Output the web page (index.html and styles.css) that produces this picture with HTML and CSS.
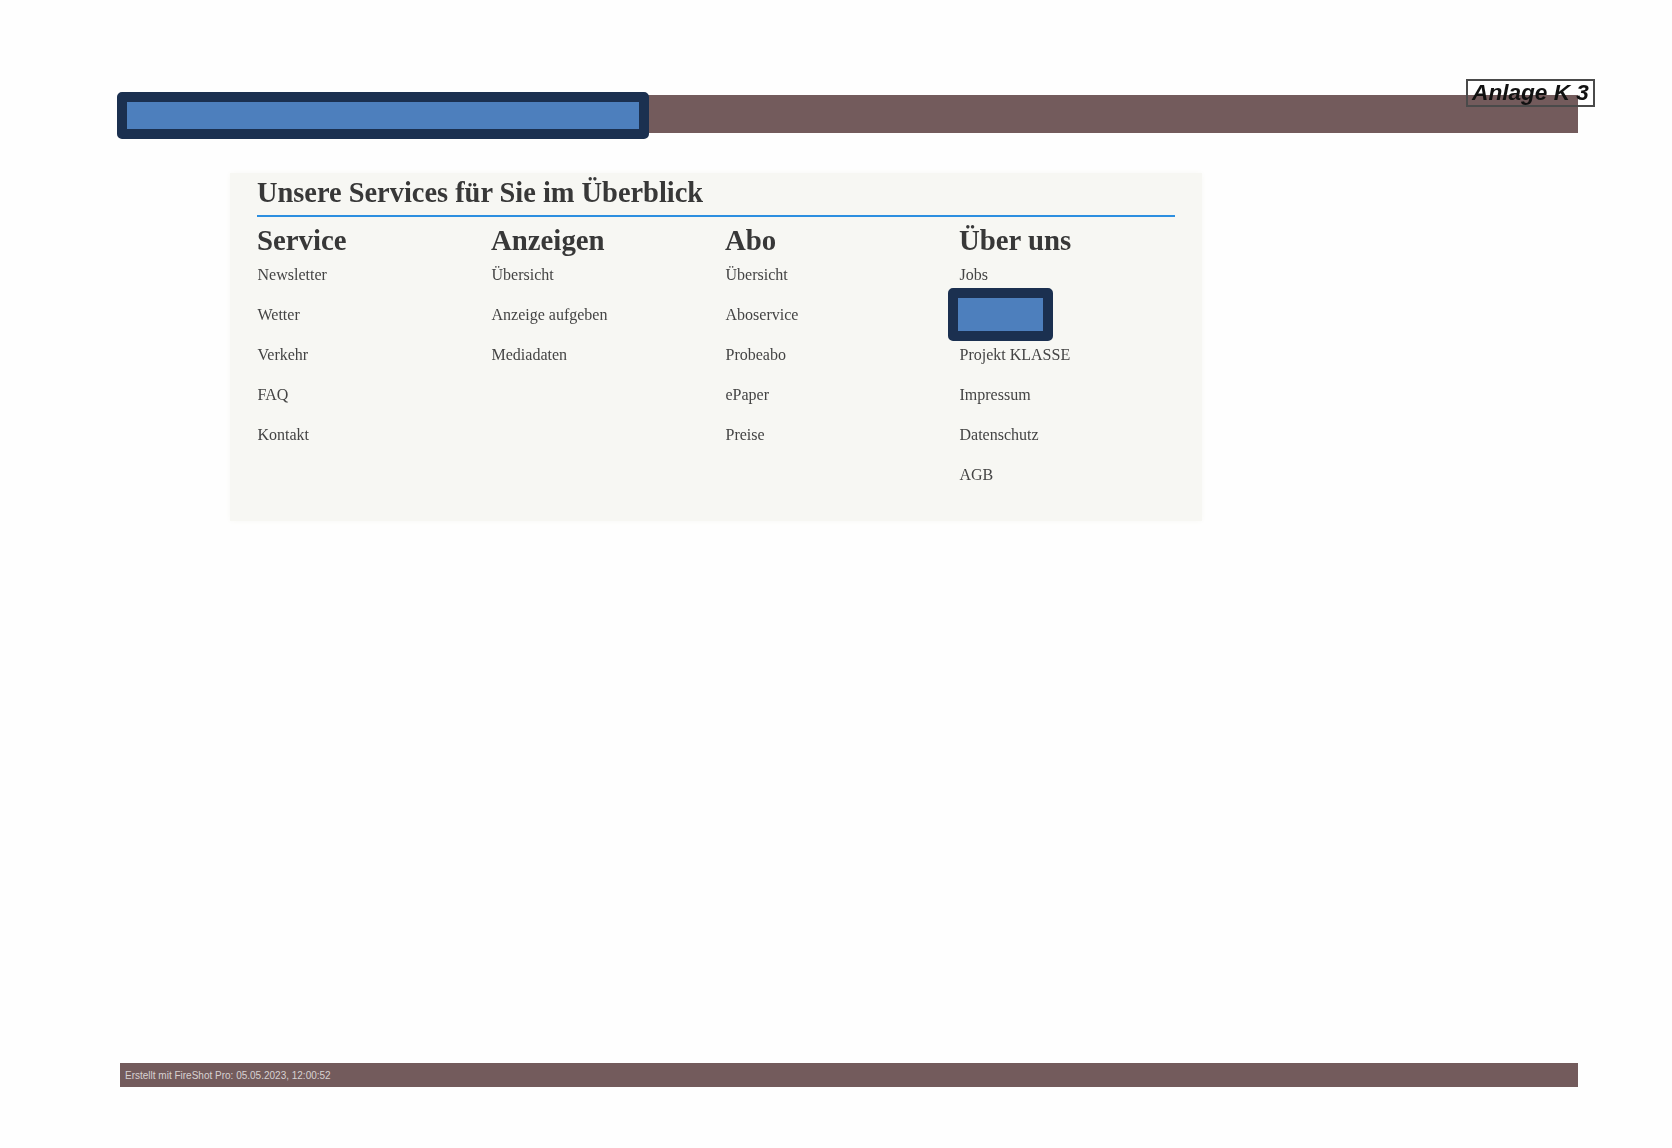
FILE: index.html
```html
<!DOCTYPE html>
<html lang="de">
<head>
<meta charset="utf-8">
<title>Anlage K 3</title>
<link rel="stylesheet" href="styles.css">
</head>
<body>
<div class="page">
  <header class="topbar">
    <div class="redact redact-top"></div>
    <div class="stamp">Anlage K 3</div>
  </header>
  <main class="panel">
    <h1 class="title">Unsere Services für Sie im Überblick</h1>
    <div class="cols">
      <section class="col">
        <h2 class="col-head">Service</h2>
        <ul class="links">
          <li class="link">Newsletter</li>
          <li class="link">Wetter</li>
          <li class="link">Verkehr</li>
          <li class="link">FAQ</li>
          <li class="link">Kontakt</li>
        </ul>
      </section>
      <section class="col">
        <h2 class="col-head">Anzeigen</h2>
        <ul class="links">
          <li class="link">Übersicht</li>
          <li class="link">Anzeige aufgeben</li>
          <li class="link">Mediadaten</li>
        </ul>
      </section>
      <section class="col">
        <h2 class="col-head">Abo</h2>
        <ul class="links">
          <li class="link">Übersicht</li>
          <li class="link">Aboservice</li>
          <li class="link">Probeabo</li>
          <li class="link">ePaper</li>
          <li class="link">Preise</li>
        </ul>
      </section>
      <section class="col">
        <h2 class="col-head">Über uns</h2>
        <ul class="links">
          <li class="link">Jobs</li>
          <li class="link"><div class="redact redact-link"></div></li>
          <li class="link">Projekt KLASSE</li>
          <li class="link">Impressum</li>
          <li class="link">Datenschutz</li>
          <li class="link">AGB</li>
        </ul>
      </section>
    </div>
  </main>
  <footer class="footbar">Erstellt mit FireShot Pro: 05.05.2023, 12:00:52</footer>
</div>
</body>
</html>
```
FILE: styles.css
```css
* { box-sizing: border-box; }
html, body { margin: 0; padding: 0; background: #fefefe; }
.page {
  height: 1148px;
  padding: 95px 94px 61px 120px;
  display: flex;
  flex-direction: column;
  overflow: hidden;
}
.topbar {
  position: relative;
  height: 38px;
  background: #735b5c;
  flex: none;
}
.redact {
  background: #4d7fbd;
  border: 10px solid #1b3050;
  border-radius: 5px;
  position: absolute;
}
.redact-top { left: -3px; top: -3px; width: 532px; height: 47px; }
.stamp {
  position: absolute;
  left: 1346px;
  top: -16px;
  width: 129px;
  height: 28px;
  border: 2px solid #4a4a4a;
  font: italic bold 22.6px/23px "Liberation Sans", Arial, sans-serif;
  color: #111;
  text-align: center;
  white-space: nowrap;
  filter: blur(0.5px);
}
.panel {
  width: 972px;
  height: 348px;
  margin: 40px 0 0 110px;
  padding: 0 27px 0 27px;
  background: #f7f7f3;
  box-shadow: 0 0 6px #f9f9f6;
  flex: none;
}
.title {
  margin: 0;
  height: 44px;
  border-bottom: 2px solid #2d8fe0;
  font: bold 28.4px/39px "Liberation Serif", "Times New Roman", serif;
  color: #383838;
  filter: blur(0.4px);
}
.cols {
  display: grid;
  grid-template-columns: repeat(4, 234px);
}
.col-head {
  margin: 0;
  height: 39px;
  padding-top: 3px;
  font: bold 28.8px/40px "Liberation Serif", "Times New Roman", serif;
  color: #383838;
  filter: blur(0.4px);
}
.links { list-style: none; margin: 0; padding: 0; }
.link {
  position: relative;
  height: 40px;
  padding-left: 0.5px;
  font: 16px/38px "Liberation Serif", "Times New Roman", serif;
  color: #444;
  filter: blur(0.5px);
}
.redact-link { left: -11px; top: -8px; width: 105px; height: 53px; filter: blur(0); }
.footbar {
  margin-top: auto;
  height: 24px;
  background: #735b5c;
  color: #d8d2d2;
  font: 10px/26px "Liberation Sans", Arial, sans-serif;
  padding-left: 5px;
  flex: none;
}
```
